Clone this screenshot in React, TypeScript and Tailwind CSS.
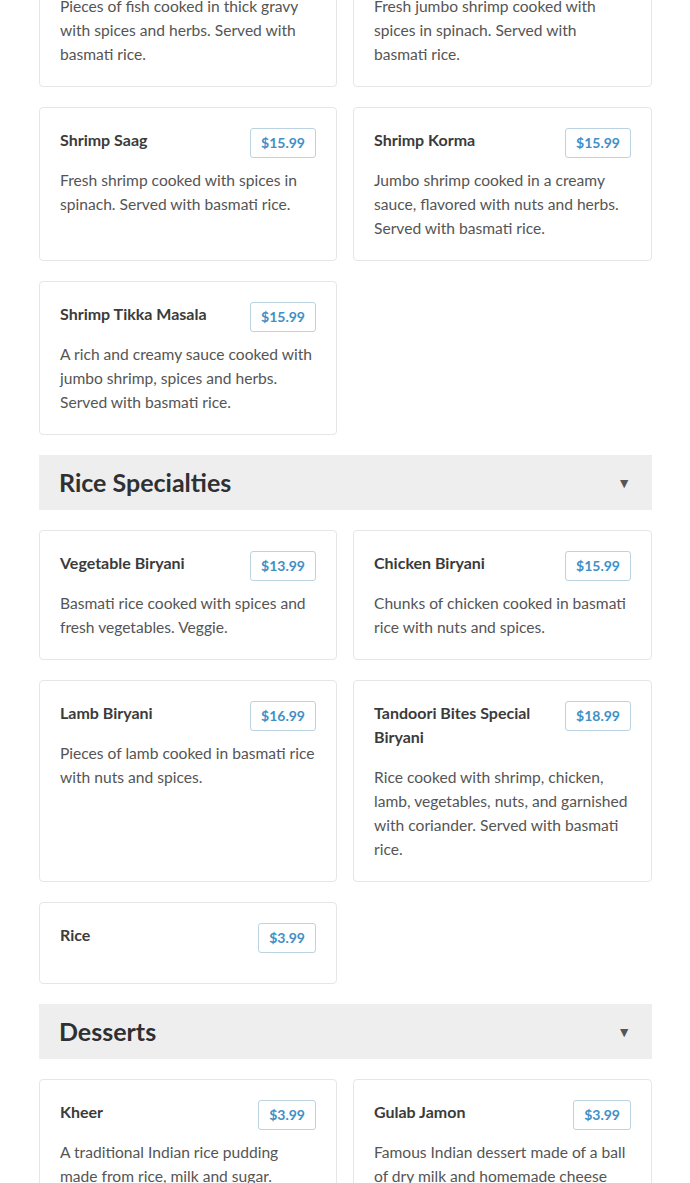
import React from "react";

type Item = { name: string; price: string; desc?: string };

const topItems: Item[] = [
  { name: "Fish Curry", price: "$14.99", desc: "Pieces of fish cooked in thick gravy with spices and herbs. Served with basmati rice." },
  { name: "Jumbo Shrimp Saag", price: "$17.99", desc: "Fresh jumbo shrimp cooked with spices in spinach. Served with basmati rice." },
  { name: "Shrimp Saag", price: "$15.99", desc: "Fresh shrimp cooked with spices in spinach. Served with basmati rice." },
  { name: "Shrimp Korma", price: "$15.99", desc: "Jumbo shrimp cooked in a creamy sauce, flavored with nuts and herbs. Served with basmati rice." },
  { name: "Shrimp Tikka Masala", price: "$15.99", desc: "A rich and creamy sauce cooked with jumbo shrimp, spices and herbs. Served with basmati rice." },
];

const rice: Item[] = [
  { name: "Vegetable Biryani", price: "$13.99", desc: "Basmati rice cooked with spices and fresh vegetables. Veggie." },
  { name: "Chicken Biryani", price: "$15.99", desc: "Chunks of chicken cooked in basmati rice with nuts and spices." },
  { name: "Lamb Biryani", price: "$16.99", desc: "Pieces of lamb cooked in basmati rice with nuts and spices." },
  { name: "Tandoori Bites Special Biryani", price: "$18.99", desc: "Rice cooked with shrimp, chicken, lamb, vegetables, nuts, and garnished with coriander. Served with basmati rice." },
  { name: "Rice", price: "$3.99" },
];

const desserts: Item[] = [
  { name: "Kheer", price: "$3.99", desc: "A traditional Indian rice pudding made from rice, milk and sugar." },
  { name: "Gulab Jamon", price: "$3.99", desc: "Famous Indian dessert made of a ball of dry milk and homemade cheese soaked in syrup." },
];

function Card({ item }: { item: Item }) {
  return (
    <div className="rounded-[4px] border border-[#e6e6e6] bg-white p-5">
      <div className="flex items-start justify-between gap-3">
        <h3 className="mb-4 text-[16px] font-bold leading-6 text-[#3b3b3b]">{item.name}</h3>
        <span className="shrink-0 rounded-[3px] border border-[#bcd3e2] px-[10px] text-[14px] font-bold leading-7 text-[#3f90c6]">
          {item.price}
        </span>
      </div>
      {item.desc && <p className="text-[15.6px] leading-6 text-[#555]">{item.desc}</p>}
    </div>
  );
}

function Section({ title }: { title: string }) {
  return (
    <div className="flex h-[55px] items-center justify-between bg-[#eeeeee] pl-5 pr-[21px]">
      <h2 className="-mt-0.5 text-[25px] font-bold leading-8 text-[#2f3033]">{title}</h2>
      <span className="text-[14px] text-[#555]">▼</span>
    </div>
  );
}

function Grid({ items }: { items: Item[] }) {
  return (
    <div className="grid grid-cols-[298px_299px] gap-x-4 gap-y-5">
      {items.map((it) => (
        <Card key={it.name} item={it} />
      ))}
    </div>
  );
}

export default function App() {
  return (
    <div className="h-[1183px] overflow-hidden bg-white font-['Lato','Liberation_Sans',sans-serif]">
      <div className="ml-[39px] mt-[-67px] flex w-[613px] flex-col gap-5">
        <Grid items={topItems} />
        <Section title="Rice Specialties" />
        <Grid items={rice} />
        <Section title="Desserts" />
        <Grid items={desserts} />
      </div>
    </div>
  );
}
